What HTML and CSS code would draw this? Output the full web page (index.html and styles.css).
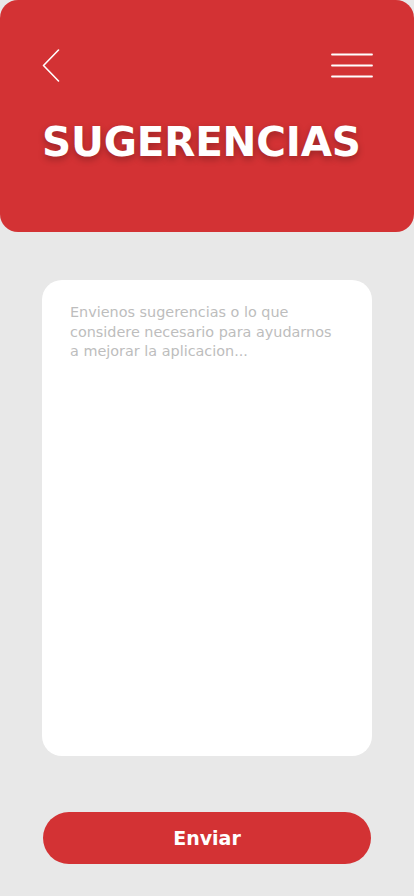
FILE: index.html
```html
<!DOCTYPE html>
<html lang="es">
<head>
<meta charset="utf-8">
<meta name="viewport" content="width=device-width, initial-scale=1">
<title>Sugerencias</title>
<link rel="stylesheet" href="styles.css">
</head>
<body>
<div class="screen">
  <header class="header">
    <div class="nav">
      <button class="icon-btn back" aria-label="Volver">
        <svg width="18" height="33" viewBox="0 0 18 33"><path d="M16.5 1 L1.5 16.5 L16.5 32" fill="none" stroke="#fff" stroke-width="1.6" stroke-linecap="round" stroke-linejoin="round"/></svg>
      </button>
      <button class="icon-btn menu" aria-label="Menú">
        <svg width="42" height="26" viewBox="0 0 42 26"><g stroke="#fff" stroke-width="1.8" stroke-linecap="round"><line x1="1" y1="1.5" x2="41" y2="1.5"/><line x1="1" y1="12.5" x2="41" y2="12.5"/><line x1="1" y1="23.5" x2="41" y2="23.5"/></g></svg>
      </button>
    </div>
    <h1 class="title">SUGERENCIAS</h1>
  </header>
  <main class="content">
    <textarea class="box" placeholder="Envienos sugerencias o lo que considere necesario para ayudarnos a mejorar la aplicacion..."></textarea>
    <button class="send">Enviar</button>
  </main>
</div>
</body>
</html>
```
FILE: styles.css
```css
* { box-sizing: border-box; }
html, body { margin: 0; padding: 0; }
body {
  background: #e8e8e8;
  font-family: "DejaVu Sans", "Open Sans", sans-serif;
  width: 414px;
  height: 896px;
  overflow: hidden;
}
.screen { display: flex; flex-direction: column; }
.header {
  background: #d33234;
  height: 232px;
  border-radius: 18px;
  padding: 49px 42px 0 42px;
}
.nav {
  display: flex;
  justify-content: space-between;
  align-items: flex-start;
}
.icon-btn {
  background: none;
  border: 0;
  padding: 0;
  display: block;
}
.icon-btn svg { display: block; }
.menu { margin-top: 4px; margin-right: -1px; }
.title {
  margin: 36px 0 0 0;
  color: #fff;
  font-family: "DejaVu Sans", sans-serif;
  font-weight: 700;
  font-size: 40.5px;
  letter-spacing: -0.2px;
  line-height: 48px;
  text-shadow: 0 3px 7px rgba(0,0,0,0.28);
}
.content {
  display: flex;
  flex-direction: column;
  padding: 48px 42px 0 42px;
}
.box {
  display: block;
  width: 330px;
  height: 476px;
  background: #fff;
  border: 0;
  border-radius: 20px;
  padding: 23px 28px;
  resize: none;
  outline: none;
  font-family: "DejaVu Sans", sans-serif;
  font-size: 14.4px;
  line-height: 19.5px;
  color: #999;
}
.box::placeholder { color: #bdbdbd; }
.send {
  margin: 56px 0 0 1px;
  width: 328px;
  height: 52px;
  border: 0;
  border-radius: 26px;
  background: #d33234;
  color: #fff;
  font-family: "DejaVu Sans", sans-serif;
  font-weight: 700;
  font-size: 19px;
  padding: 0;
}
```
